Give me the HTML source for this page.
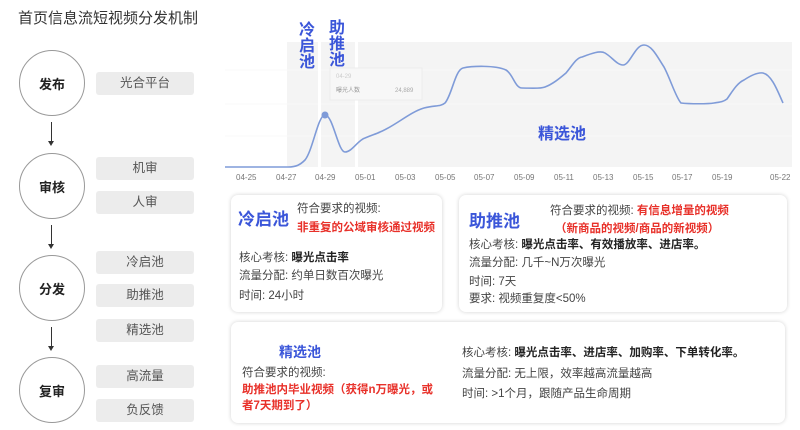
<!DOCTYPE html>
<html><head><meta charset="utf-8"><style>
*{margin:0;padding:0;box-sizing:border-box}
body{width:800px;height:430px;background:#fff;position:relative;overflow:hidden;font-family:"Liberation Sans","Noto Sans CJK SC",sans-serif;color:#333}
.a{position:absolute;white-space:nowrap}
.c{position:absolute;left:19px;width:66px;height:66px;border:1px solid #999;border-radius:50%;font-weight:bold;font-size:13px;color:#222;display:flex;align-items:center;justify-content:center}
.b{position:absolute;left:96px;width:98px;height:23px;background:#ececec;border-radius:3px;font-size:12.5px;color:#555;text-align:center;line-height:23px}
.ar{position:absolute;left:51px;width:1px;height:20px;background:#333}
.ar:after{content:"";position:absolute;left:-3px;bottom:-4px;border-left:3.5px solid transparent;border-right:3.5px solid transparent;border-top:5px solid #333}
.card{position:absolute;background:#fff;border-radius:7px;box-shadow:0 0 4px rgba(0,0,0,.18)}
.t{font-size:11.5px;color:#444}
.r{color:#e8312a;font-weight:bold}
.k{font-weight:bold;color:#222}
.bl{color:#3b56d9;font-weight:bold}
.lbl{font-size:8px;color:#777;position:absolute;top:173px}
</style></head><body>
<div class="a" style="left:18px;top:7px;font-size:15px;color:#333">首页信息流短视频分发机制</div>

<div class="c" style="top:50px">发布</div>
<div class="c" style="top:153px">审核</div>
<div class="c" style="top:255px">分发</div>
<div class="c" style="top:357px">复审</div>
<div class="ar" style="top:122px"></div>
<div class="ar" style="top:225px"></div>
<div class="ar" style="top:327px"></div>
<div class="b" style="top:72px">光合平台</div>
<div class="b" style="top:157px">机审</div>
<div class="b" style="top:191px">人审</div>
<div class="b" style="top:251px">冷启池</div>
<div class="b" style="top:284px">助推池</div>
<div class="b" style="top:319px">精选池</div>
<div class="b" style="top:365px">高流量</div>
<div class="b" style="top:399px">负反馈</div>

<svg class="a" style="left:0;top:0" width="800" height="190">
<rect x="287" y="42" width="505" height="125" fill="#f4f4f4"/>
<g stroke="#f8f8f8" stroke-width="1"><line x1="225" y1="70" x2="792" y2="70"/><line x1="225" y1="104" x2="792" y2="104"/><line x1="225" y1="136" x2="792" y2="136"/></g>
<rect x="318" y="42" width="3" height="125" fill="#fff"/>
<rect x="355" y="42" width="3" height="125" fill="#fff"/>
<rect x="330" y="68" width="92" height="32" fill="#f7f7f7" stroke="#ececec"/>
<text x="336" y="78" font-size="6" fill="#ccc" font-family="Liberation Sans">04-29</text>
<text x="336" y="92" font-size="6" fill="#999" font-family="Liberation Sans,Noto Sans CJK SC">曝光人数</text>
<text x="395" y="92" font-size="6" fill="#aaa" font-family="Liberation Sans">24,889</text>
<path d="M225 167 L288 167 C296 167 300 165 305 160 C313 150 318 115 325 115 C333 115 338 152 345 152 C352 152 358 140 365 138 C372 135 376 134 380 132 C395 126 410 112 424 108 C435 105 440 107 445 103 C452 95 455 70 463 68 C472 66 495 65 506 70 C513 74 515 88 522 88 C530 88 540 89 545 87 C553 84 560 78 566 73 C572 66 576 58 582 57 C590 54 600 50 605 53 C612 57 617 65 623 65 C630 65 635 45 644 45 C652 45 658 58 664 67 C670 78 676 98 681 103 C690 104 708 104 714 103 C720 102 723 102 727 99 C732 92 737 83 744 80 C750 76 757 72 763 73 C772 75 778 92 783 103" fill="none" stroke="#7f9bd8" stroke-width="1.6"/>
<circle cx="325" cy="115" r="3.5" fill="#7f9bd8"/>
<g font-family="Liberation Sans,Noto Sans CJK SC" font-size="16" font-weight="bold" fill="#3b56d9">
<text x="299" y="35">冷</text><text x="299" y="51">启</text><text x="299" y="67">池</text>
<text x="329" y="33">助</text><text x="329" y="49">推</text><text x="329" y="65">池</text>
<text x="538" y="139" font-size="16">精选池</text>
</g>
</svg>
<div class="lbl" style="left:236px">04-25</div><div class="lbl" style="left:276px">04-27</div><div class="lbl" style="left:315px">04-29</div><div class="lbl" style="left:355px">05-01</div><div class="lbl" style="left:395px">05-03</div><div class="lbl" style="left:435px">05-05</div><div class="lbl" style="left:474px">05-07</div><div class="lbl" style="left:514px">05-09</div><div class="lbl" style="left:554px">05-11</div><div class="lbl" style="left:593px">05-13</div><div class="lbl" style="left:633px">05-15</div><div class="lbl" style="left:672px">05-17</div><div class="lbl" style="left:712px">05-19</div><div class="lbl" style="left:770px">05-22</div>

<div class="card" style="left:231px;top:195px;width:211px;height:117px"></div>
<div class="card" style="left:459px;top:195px;width:328px;height:117px"></div>
<div class="card" style="left:231px;top:322px;width:554px;height:101px"></div>

<div class="a bl" style="left:238px;top:205px;font-size:17px">冷启池</div>
<div class="a t" style="left:297px;top:200px">符合要求的视频:</div>
<div class="a t r" style="left:297px;top:219px">非重复的公域审核通过视频</div>
<div class="a t" style="left:239px;top:249px">核心考核: <span class="k">曝光点击率</span></div>
<div class="a t" style="left:239px;top:267px">流量分配: 约单日数百次曝光</div>
<div class="a t" style="left:239px;top:287px">时间: 24小时</div>

<div class="a bl" style="left:469px;top:207px;font-size:17px">助推池</div>
<div class="a t" style="left:550px;top:202px">符合要求的视频: <span class="r">有信息增量的视频</span></div>
<div class="a t r" style="left:555px;top:220px">（新商品的视频/商品的新视频）</div>
<div class="a t" style="left:469px;top:236px">核心考核: <span class="k">曝光点击率、有效播放率、进店率。</span></div>
<div class="a t" style="left:469px;top:254px">流量分配: 几千~N万次曝光</div>
<div class="a t" style="left:469px;top:273px">时间: 7天</div>
<div class="a t" style="left:469px;top:290px">要求: 视频重复度&lt;50%</div>

<div class="a bl" style="left:279px;top:342px;font-size:14px">精选池</div>
<div class="a t" style="left:242px;top:364px">符合要求的视频:</div>
<div class="a t r" style="left:242px;top:381px">助推池内毕业视频（获得n万曝光，或</div>
<div class="a t r" style="left:242px;top:397px">者7天期到了）</div>
<div class="a t" style="left:462px;top:344px">核心考核: <span class="k">曝光点击率、进店率、加购率、下单转化率。</span></div>
<div class="a t" style="left:462px;top:365px">流量分配: 无上限，效率越高流量越高</div>
<div class="a t" style="left:462px;top:385px">时间: &gt;1个月，跟随产品生命周期</div>
</body></html>
